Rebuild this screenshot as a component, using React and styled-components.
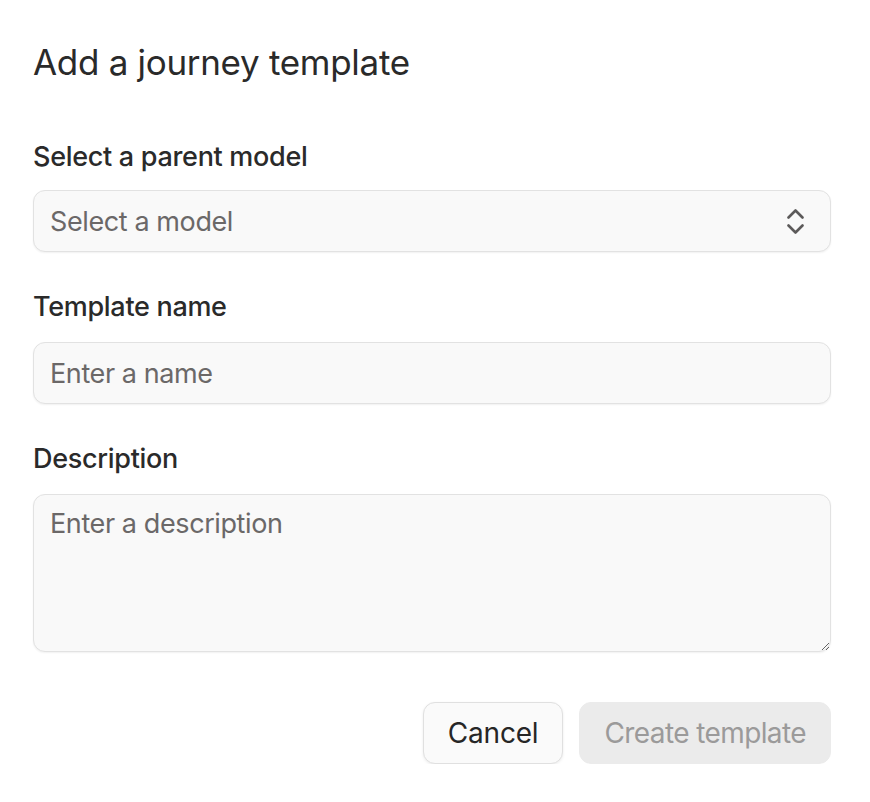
import React from "react";
import styled, { createGlobalStyle } from "styled-components";

const Global = createGlobalStyle`
  html, body { margin: 0; padding: 0; background: #ffffff; }
  body { font-family: Inter, "Noto Sans", "Liberation Sans", sans-serif; color: #262626; }
  * { box-sizing: border-box; }
`;

const Dialog = styled.div`
  width: 864px;
  padding: 38px 0 0 33px;
  display: flex;
  flex-direction: column;
`;

const Title = styled.h2`
  margin: 0;
  font-size: 35px;
  line-height: 48px;
  font-weight: 400;
  color: #2a2a2a;
  letter-spacing: -0.3px;
`;

const Form = styled.form`
  margin-top: 55px;
  width: 798px;
  display: flex;
  flex-direction: column;
  gap: 39px;
`;

const Field = styled.div`
  display: flex;
  flex-direction: column;
  gap: ${(p) => p.$gap || 18}px;
`;

const Label = styled.label`
  font-size: 27px;
  line-height: 32px;
  font-weight: 500;
  letter-spacing: -0.3px;
  color: #2a2a2a;
`;

const controlBase = `
  width: 100%;
  background: #f9f9f9;
  border: 1px solid #e2e2e2;
  border-radius: 12px;
  box-shadow: 0 1px 2px rgba(0, 0, 0, 0.06);
  font-family: Inter, "Noto Sans", "Liberation Sans", sans-serif;
  font-size: 27px;
  letter-spacing: -0.4px;
  color: #2a2a2a;
  outline: none;
`;

const SelectBox = styled.div`
  ${controlBase}
  height: 62px;
  padding: 0 26px 0 16px;
  display: flex;
  align-items: center;
  justify-content: space-between;
`;

const Placeholder = styled.span`
  color: #6b6868;
`;

const TextInput = styled.input`
  ${controlBase}
  height: 62px;
  padding: 0 16px;
  &::placeholder { color: #6b6868; }
`;

const TextArea = styled.textarea`
  ${controlBase}
  height: 158px;
  padding: 13px 16px;
  line-height: 32px;
  resize: vertical;
  display: block;
  &::placeholder { color: #6b6868; }
`;

const Actions = styled.div`
  margin-top: 11px;
  display: flex;
  justify-content: flex-end;
  gap: 16px;
`;

const Button = styled.button`
  height: 62px;
  padding: 0 24px;
  border-radius: 12px;
  font-family: Inter, "Noto Sans", "Liberation Sans", sans-serif;
  font-size: 28px;
  letter-spacing: ${(p) => (p.$primary ? "-0.6px" : "-0.2px")};
  font-weight: 400;
  cursor: pointer;
  background: ${(p) => (p.$primary ? "#ebebeb" : "#fafafa")};
  color: ${(p) => (p.$primary ? "#9b9a9a" : "#262626")};
  border: 1px solid ${(p) => (p.$primary ? "#ebebeb" : "#e0e0e0")};
  box-shadow: ${(p) => (p.$primary ? "none" : "0 1px 3px rgba(0,0,0,0.08)")};
`;

const UpDown = () => (
  <svg width="17" height="27" viewBox="0 0 17 27" fill="none" stroke="#5c5a5a" strokeWidth="2.6" strokeLinecap="round" strokeLinejoin="round">
    <path d="M1.5 9.5 L8.5 2.5 L15.5 9.5" />
    <path d="M1.5 17.5 L8.5 24.5 L15.5 17.5" />
  </svg>
);

export default function App() {
  return (
    <>
      <Global />
      <Dialog>
        <Title>Add a journey template</Title>
        <Form onSubmit={(e) => e.preventDefault()}>
          <Field $gap={17}>
            <Label>Select a parent model</Label>
            <SelectBox>
              <Placeholder>Select a model</Placeholder>
              <UpDown />
            </SelectBox>
          </Field>
          <Field $gap={19}>
            <Label>Template name</Label>
            <TextInput placeholder="Enter a name" />
          </Field>
          <Field $gap={19}>
            <Label>Description</Label>
            <TextArea placeholder="Enter a description" />
          </Field>
          <Actions>
            <Button type="button">Cancel</Button>
            <Button type="button" $primary disabled>Create template</Button>
          </Actions>
        </Form>
      </Dialog>
    </>
  );
}
